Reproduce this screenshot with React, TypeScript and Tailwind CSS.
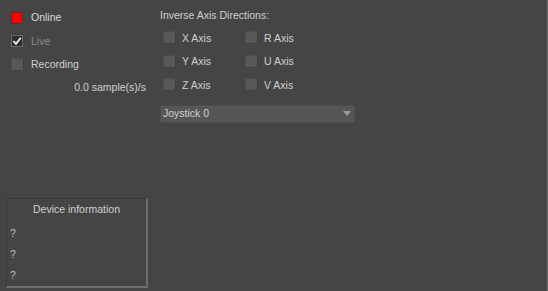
import React from 'react';

const font = { fontFamily: '"Liberation Sans", Arial, sans-serif' };

function Box({ checked = false, red = false }: { checked?: boolean; red?: boolean }) {
  if (red) {
    return <div className="w-[12px] h-[12px] bg-[#ff0000] border border-[#5a2a2a] shrink-0" />;
  }
  if (checked) {
    return (
      <div className="w-[12px] h-[12px] bg-[#2e2e2e] border border-[#6a6a6a] shrink-0 flex items-center justify-center">
        <svg width="10" height="10" viewBox="0 0 10 10">
          <path d="M1.5 5.2 L4 7.8 L8.8 1.8" stroke="#f2f2f2" strokeWidth="1.8" fill="none" />
        </svg>
      </div>
    );
  }
  return <div className="w-[13px] h-[13px] bg-[#585858] border border-[#4c4c4c] border-b-[#3e3e3e] border-r-[#3e3e3e] shrink-0" />;
}

function AxisItem({ label }: { label: string }) {
  return (
    <div className="flex items-center gap-[6px] w-[82px]">
      <Box />
      <span className="text-[#d0d0d0]">{label}</span>
    </div>
  );
}

export default function App() {
  return (
    <div
      className="w-[548px] h-[291px] bg-[#454545] border-r border-[#6c6c6c] flex text-[10.5px] leading-none overflow-hidden"
      style={font}
    >
      {/* left column */}
      <div className="w-[154px] flex flex-col pl-[11px] pt-[6px]">
        <div className="h-[23px] flex items-center gap-[8px]">
          <Box red />
          <span className="text-[#dadada]">Online</span>
        </div>
        <div className="h-[24px] flex items-center gap-[8px]">
          <Box checked />
          <span className="text-[#8c8c8c]">Live</span>
        </div>
        <div className="h-[23px] flex items-center gap-[7px]">
          <Box />
          <span className="text-[#d0d0d0]">Recording</span>
        </div>
        <div className="h-[23px] flex items-center justify-end pr-[8px] text-[#d0d0d0]">0.0 sample(s)/s</div>

        <div className="mt-auto mb-[3px] -ml-[5px] w-[142px] h-[90px] border-t border-l border-[#3a3a3a] border-r-2 border-b-2 border-r-[#6e6e6e] border-b-[#6e6e6e] flex flex-col">
          <div className="h-[22px] flex items-center justify-center text-[#d0d0d0]">Device information</div>
          <div className="pl-[3px] pt-[4px] flex flex-col text-[#b8c0d8]">
            <div className="h-[21px] flex items-center">?</div>
            <div className="h-[21px] flex items-center">?</div>
            <div className="h-[21px] flex items-center">?</div>
          </div>
        </div>
      </div>

      {/* right column */}
      <div className="flex flex-col pl-[6px] pt-[9px]">
        <div className="h-[12px] flex items-center text-[#d0d0d0]">Inverse Axis Directions:</div>
        <div className="pl-[3px] pt-[5px] flex flex-col">
          <div className="h-[23.5px] flex items-center">
            <AxisItem label="X Axis" />
            <AxisItem label="R Axis" />
          </div>
          <div className="h-[23.5px] flex items-center">
            <AxisItem label="Y Axis" />
            <AxisItem label="U Axis" />
          </div>
          <div className="h-[23.5px] flex items-center">
            <AxisItem label="Z Axis" />
            <AxisItem label="V Axis" />
          </div>
        </div>
        <div className="mt-[8px] w-[195px] h-[18px] bg-[#565656] border border-[#4e4e4e] flex items-center justify-between pl-[2px] pr-[3px] text-[#d0d0d0]">
          <span>Joystick 0</span>
          <svg width="8" height="5" viewBox="0 0 8 5">
            <path d="M0 0 L8 0 L4 5 Z" fill="#9a9a9a" />
          </svg>
        </div>
      </div>
    </div>
  );
}
